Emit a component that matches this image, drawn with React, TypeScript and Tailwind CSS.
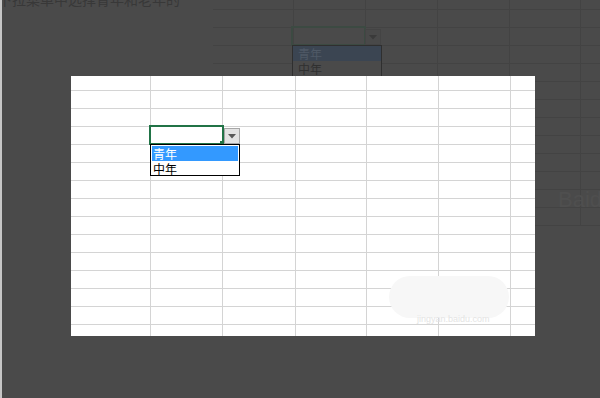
import React from 'react';

const cjk = "font-['Noto_Sans_CJK_SC','Noto_Sans',sans-serif]";

function Caret({ color }: { color: string }) {
  return (
    <svg width="8" height="5" viewBox="0 0 8 5">
      <path d="M0 0 L8 0 L4 4.5 Z" fill={color} />
    </svg>
  );
}

// the dimmed sheet behind the dialog
function BackSheet() {
  const cells = Array.from({ length: 6 * 14 });
  return (
    <div className="absolute left-[211px] top-0 right-0 h-[226px]">
      <div className="grid h-full w-full grid-cols-[80px_71px_71px_71px_70px_1fr] grid-rows-[9px_repeat(12,17px)_0px] gap-px bg-[#434343]">
        {cells.map((_, i) => (
          <div key={i} className="bg-[#4a4a4a]" />
        ))}
      </div>

      {/* dimmed dropdown */}
      <div className="absolute left-[78px] top-[26px] h-[20px] w-[75px] border-2 border-[#3c4a42]" />
      <div className="absolute left-[152px] top-[29px] flex h-[16px] w-[16px] items-center justify-center border border-[#444] bg-[#494949]">
        <Caret color="#3a3a3a" />
      </div>
      <div className={`absolute left-[79px] top-[45px] h-[40px] w-[90px] border border-[#2f2f2f] bg-[#4a4a4a] text-[12px] leading-[15px] ${cjk}`}>
        <div className="bg-[#3b4552] pl-[5px] text-[#4f5966]">青年</div>
        <div className="pl-[5px] text-[#303030]">中年</div>
      </div>
    </div>
  );
}

function Sheet() {
  const cells = Array.from({ length: 7 * 15 });
  return (
    <div className="relative h-[260px] w-[464px]">
      <div className="grid h-full w-full grid-cols-[79px_71px_72px_70px_71px_71px_1fr] grid-rows-[14px_repeat(13,17px)_1fr] gap-px bg-[#d4d4d4]">
        {cells.map((_, i) => (
          <div key={i} className="bg-white" />
        ))}
      </div>

      {/* active cell */}
      <div className="absolute left-[78px] top-[49px] h-[20px] w-[75px] border-2 border-[#217346]" />
      <div className="absolute left-[149px] top-[65px] h-[4px] w-[4px] bg-[#217346]" />

      {/* dropdown arrow */}
      <div className="absolute left-[153px] top-[52px] flex h-[16px] w-[16px] items-center justify-center border border-[#a6a6a6] bg-[#e3e3e3]">
        <Caret color="#595959" />
      </div>

      {/* list */}
      <div className={`absolute left-[79px] top-[68px] flex h-[32px] w-[90px] flex-col border border-black bg-white text-[12px] leading-[15px] ${cjk}`}>
        <div className="mx-px mt-px h-[15px] bg-[#3399ff] pl-[1px] text-white">青年</div>
        <div className="h-[15px] pl-[2px] text-black">中年</div>
      </div>

      {/* watermark */}
      <div className="absolute left-[318px] top-[200px] h-[42px] w-[120px] rounded-[22px] bg-[#f7f7f7]" />
      <div className="absolute left-[346px] top-[238px] text-[9px] leading-[10px] text-[#e4e4e4] font-['Liberation_Sans',sans-serif]">
        jingyan.baidu.com
      </div>
    </div>
  );
}

export default function App() {
  return (
    <div className={`relative h-[398px] w-[600px] overflow-hidden border-l-2 border-[#c6c6c6] bg-[#4a4a4a] ${cjk}`}>
      <BackSheet />

      <div className="absolute left-[-4px] top-[-8px] text-[14px] leading-[14px] text-[#383838] whitespace-nowrap">
        下拉菜单中选择青年和老年的
      </div>
      <div className="absolute left-[556px] top-[188px] text-[22px] leading-[24px] text-[#4f4f4f] font-['Liberation_Sans',sans-serif]">
        Baidu
      </div>

      {/* dialog with the sheet */}
      <div className="relative flex pl-[69px] pt-[76px]">
        <Sheet />
      </div>
    </div>
  );
}
